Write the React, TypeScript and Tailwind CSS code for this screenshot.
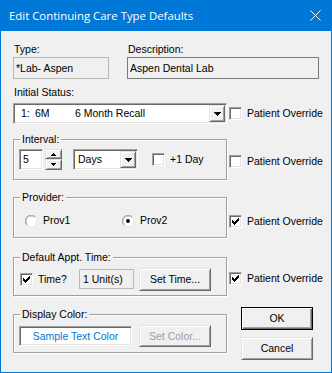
import React from "react";

const raised =
  "border border-t-[#e3e3e3] border-l-[#e3e3e3] border-r-[#696969] border-b-[#696969] shadow-[inset_1px_1px_0_#ffffff,inset_-1px_-1px_0_#a0a0a0] bg-[#f0f0f0]";
const sunken =
  "border border-t-[#a0a0a0] border-l-[#a0a0a0] border-r-white border-b-white shadow-[inset_1px_1px_0_#696969,inset_-1px_-1px_0_#e3e3e3]";

const checkPixels: [number, number][] = [
  [6, 0],
  [5, 1], [6, 1],
  [0, 2], [4, 2], [5, 2], [6, 2],
  [0, 3], [1, 3], [3, 3], [4, 3], [5, 3],
  [0, 4], [1, 4], [2, 4], [3, 4], [4, 4],
  [1, 5], [2, 5], [3, 5],
  [2, 6],
];

function Check({ checked, className = "" }: { checked?: boolean; className?: string }) {
  return (
    <div className={`w-[13px] h-[13px] shrink-0 bg-white ${sunken} flex items-center justify-center ${className}`}>
      {checked && (
        <svg width="7" height="7" viewBox="0 0 7 7" shapeRendering="crispEdges">
          {checkPixels.map(([x, y]) => (
            <rect key={`${x}-${y}`} x={x} y={y} width="1" height="1" fill="#000" />
          ))}
        </svg>
      )}
    </div>
  );
}

function Radio({ checked }: { checked?: boolean }) {
  return (
    <svg width="12" height="12" viewBox="0 0 12 12" className="shrink-0">
      <circle cx="6" cy="6" r="5.5" fill="#ffffff" />
      <path d="M10.24 1.76 A6 6 0 0 0 1.76 10.24" stroke="#a0a0a0" strokeWidth="1" fill="none" />
      <path d="M1.76 10.24 A6 6 0 0 0 10.24 1.76" stroke="#e8e8e8" strokeWidth="1" fill="none" />
      <path d="M9.5 2.5 A4.95 4.95 0 0 0 2.5 9.5" stroke="#b8b8b8" strokeWidth="1" fill="none" />
      {checked && <circle cx="6" cy="6" r="1.9" fill="#000" />}
    </svg>
  );
}

function DropButton({ className = "" }: { className?: string }) {
  return (
    <div className={`w-[16px] h-full shrink-0 ${raised} flex items-center justify-center ${className}`}>
      <svg width="7" height="4" viewBox="0 0 7 4" shapeRendering="crispEdges">
        <path d="M0 0 H7 L3.5 4 Z" fill="#000" />
      </svg>
    </div>
  );
}

function Group({
  label,
  className = "",
  children,
}: {
  label: string;
  className?: string;
  children?: React.ReactNode;
}) {
  return (
    <div
      className={`relative w-[214px] shrink-0 border border-[#a0a0a0] shadow-[inset_1px_1px_0_#ffffff,1px_1px_0_#ffffff] ${className}`}
    >
      <span className="absolute left-[6px] -top-[7px] px-[2px] bg-[#f0f0f0] leading-[13px]">{label}</span>
      {children}
    </div>
  );
}

function Override({ checked, className = "" }: { checked?: boolean; className?: string }) {
  return (
    <div className={`flex items-center ${className}`}>
      <Check checked={checked} />
      <span className="ml-[5px] whitespace-nowrap">Patient Override</span>
    </div>
  );
}

export default function App() {
  return (
    <div className="w-[332px] h-[373px] flex flex-col bg-[#0078d7] font-['Liberation_Sans',Arial,sans-serif] text-[10.5px] leading-[13px] text-black">
      <div className="h-[31px] shrink-0 flex items-center pl-[9px] pr-[11px] text-white font-['Open_Sans',sans-serif] text-[11.4px]">
        <span className="flex-1">Edit Continuing Care Type Defaults</span>
        <svg width="11" height="11" viewBox="0 0 11 11">
          <path d="M0.5 0.5 L10.5 10.5 M10.5 0.5 L0.5 10.5" stroke="#ffffff" strokeWidth="1" />
        </svg>
      </div>

      <div className="flex-1 mx-px mb-px bg-[#f0f0f0] flex flex-col pl-[12px] pt-[12px]">
        {/* Type / Description */}
        <div className="flex gap-[18px]">
          <div className="w-[96px] flex flex-col">
            <span className="pl-px">Type:</span>
            <div className="mt-px h-[22px] border border-[#b9b9b9] bg-[#f0f0f0] flex items-center pl-[2px]">
              *Lab- Aspen
            </div>
          </div>
          <div className="w-[192px] flex flex-col">
            <span className="pl-px">Description:</span>
            <div className="mt-px h-[22px] border border-[#7a7a7a] bg-[#f0f0f0] flex items-center pl-[2px]">
              Aspen Dental Lab
            </div>
          </div>
        </div>

        {/* Initial Status */}
        <span className="mt-[7px] pl-px">Initial Status:</span>
        <div className="mt-[4px] flex items-center">
          <div className={`w-[214px] h-[21px] shrink-0 bg-white ${sunken} p-px flex items-center`}>
            <div className="flex-1 flex items-center pl-[6px]">
              <span className="w-[14px]">1:</span>
              <span className="w-[40px]">6M</span>
              <span>6 Month Recall</span>
            </div>
            <DropButton />
          </div>
          <Override className="ml-[2px]" />
        </div>

        {/* Interval */}
        <div className="mt-[15px] flex items-start">
          <Group label="Interval:" className="h-[41px]">
            <div className="pl-[5px] pt-[9px] flex items-center">
              <div className={`w-[24px] h-[21px] bg-white ${sunken} flex items-center pl-[3px]`}>5</div>
              <div className="ml-[2px] w-[17px] h-[21px] flex flex-col">
                <div className={`h-[10px] ${raised} flex items-center justify-center`}>
                  <svg width="5" height="3" viewBox="0 0 5 3" shapeRendering="crispEdges">
                    <path d="M2.5 0 L5 3 H0 Z" fill="#000" />
                  </svg>
                </div>
                <div className={`h-[11px] ${raised} flex items-center justify-center`}>
                  <svg width="5" height="3" viewBox="0 0 5 3" shapeRendering="crispEdges">
                    <path d="M0 0 H5 L2.5 3 Z" fill="#000" />
                  </svg>
                </div>
              </div>
              <div className={`ml-[11px] w-[65px] h-[21px] bg-white ${sunken} p-px flex items-center`}>
                <span className="flex-1 pl-[3px]">Days</span>
                <DropButton />
              </div>
              <Check className="ml-[14px]" />
              <span className="ml-[5px]">+1 Day</span>
            </div>
          </Group>
          <Override className="ml-[2px] mt-[16px]" />
        </div>

        {/* Provider */}
        <div className="mt-[17px] flex items-start">
          <Group label="Provider:" className="h-[41px]">
            <div className="pl-[11px] pt-[16px] flex items-center">
              <div className="w-[97px] flex items-center">
                <Radio />
                <span className="ml-[6px]">Prov1</span>
              </div>
              <div className="w-[97px] flex items-center">
                <Radio checked />
                <span className="ml-[6px]">Prov2</span>
              </div>
            </div>
          </Group>
          <Override checked className="ml-[2px] mt-[18px]" />
        </div>

        {/* Default Appt. Time */}
        <div className="mt-[19px] flex items-start">
          <Group label="Default Appt. Time:" className="h-[39px]">
            <div className="pl-[6px] pt-[9px] h-[33px] flex items-center">
              <Check checked />
              <span className="ml-[5px] w-[41px]">Time?</span>
              <div className="w-[55px] h-[20px] border border-[#b9b9b9] bg-[#f0f0f0] flex items-center pl-[3px]">
                1 Unit(s)
              </div>
              <div className={`ml-[5px] w-[72px] h-[23px] ${raised} flex items-center justify-center`}>
                Set Time...
              </div>
            </div>
          </Group>
          <Override checked className="ml-[2px] mt-[15px]" />
        </div>

        {/* Display Color + OK / Cancel */}
        <div className="mt-[11px] flex items-start">
          <Group label="Display Color:" className="mt-[7px] h-[39px]">
            <div className="pl-[5px] pt-[10px] h-[32px] flex items-center">
              <div className={`w-[113px] h-[20px] bg-white ${sunken} flex items-center justify-center text-[#0078d7]`}>
                Sample Text Color
              </div>
              <div className={`ml-[7px] w-[72px] h-[22px] ${raised} flex items-center justify-center text-[#a0a0a0]`}>
                Set Color...
              </div>
            </div>
          </Group>
          <div className="ml-[14px] flex flex-col gap-[7px]">
            <div className="w-[72px] h-[23px] border border-black shadow-[inset_1px_1px_0_#ffffff,inset_-1px_-1px_0_#696969,inset_-2px_-2px_0_#a0a0a0] bg-[#f0f0f0] flex items-center justify-center">
              OK
            </div>
            <div className={`w-[72px] h-[23px] ${raised} flex items-center justify-center`}>Cancel</div>
          </div>
        </div>
      </div>
    </div>
  );
}
